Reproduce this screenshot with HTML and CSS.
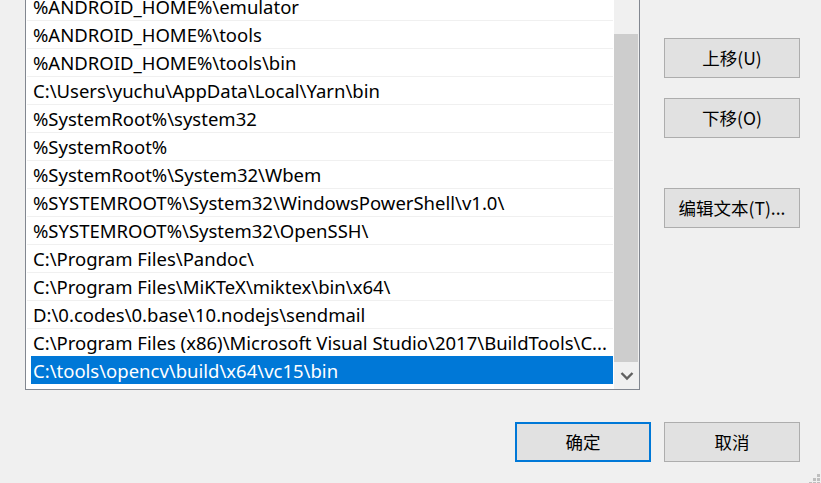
FILE: index.html
```html
<!DOCTYPE html>
<html lang="zh-CN">
<head>
<meta charset="utf-8">
<title>编辑环境变量</title>
<link rel="stylesheet" href="styles.css">
</head>
<body>
<div class="dialog">
  <div class="main">
    <div class="listbox">
      <ul class="items">
        <li><span class="txt">%ANDROID_HOME%\emulator</span></li>
        <li><span class="txt">%ANDROID_HOME%\tools</span></li>
        <li><span class="txt">%ANDROID_HOME%\tools\bin</span></li>
        <li><span class="txt">C:\Users\yuchu\AppData\Local\Yarn\bin</span></li>
        <li><span class="txt">%SystemRoot%\system32</span></li>
        <li><span class="txt">%SystemRoot%</span></li>
        <li><span class="txt">%SystemRoot%\System32\Wbem</span></li>
        <li><span class="txt">%SYSTEMROOT%\System32\WindowsPowerShell\v1.0\</span></li>
        <li><span class="txt">%SYSTEMROOT%\System32\OpenSSH\</span></li>
        <li><span class="txt">C:\Program Files\Pandoc\</span></li>
        <li><span class="txt">C:\Program Files\MiKTeX\miktex\bin\x64\</span></li>
        <li><span class="txt">D:\0.codes\0.base\10.nodejs\sendmail</span></li>
        <li><span class="txt">C:\Program Files (x86)\Microsoft Visual Studio\2017\BuildTools\C...</span></li>
        <li class="selected"><span class="txt">C:\tools\opencv\build\x64\vc15\bin</span></li>
      </ul>
      <div class="scrollbar">
        <div class="thumb"></div>
        <div class="arrow-down">
          <svg width="25" height="27" viewBox="0 0 25 27"><polyline points="7.5,11 13,16.5 18.5,11" fill="none" stroke="#606060" stroke-width="2.4"/></svg>
        </div>
      </div>
    </div>
    <div class="side">
      <button class="btn btn-up">上移(U)</button>
      <button class="btn btn-down">下移(O)</button>
      <button class="btn btn-edit">编辑文本(T)...</button>
    </div>
  </div>
  <div class="footer">
    <button class="btn btn-default">确定</button>
    <button class="btn">取消</button>
  </div>
  <svg class="grip" width="13" height="10" viewBox="0 0 13 10">
    <rect x="10" y="0" width="3" height="3" fill="#bfbfbf"/>
    <rect x="6" y="4" width="3" height="3" fill="#bfbfbf"/>
    <rect x="10" y="4" width="3" height="3" fill="#bfbfbf"/>
    <rect x="2" y="8" width="3" height="3" fill="#bfbfbf"/>
    <rect x="6" y="8" width="3" height="3" fill="#bfbfbf"/>
    <rect x="10" y="8" width="3" height="3" fill="#bfbfbf"/>
  </svg>
</div>
</body>
</html>
```
FILE: styles.css
```css
html, body {
  margin: 0;
  padding: 0;
  background: #f0f0f0;
  overflow: hidden;
}

.dialog {
  position: relative;
  width: 821px;
  height: 483px;
  overflow: hidden;
  font-family: "Noto Sans CJK SC", "Noto Sans", sans-serif;
  color: #000;
}

.main {
  display: flex;
  align-items: flex-start;
  margin-top: -9px;
  padding-left: 25px;
}

.listbox {
  display: flex;
  width: 613px;
  height: 397px;
  border: 1px solid #828790;
  background: #fff;
}

.items {
  list-style: none;
  margin: 0;
  padding: 0 1px;
  width: 586px;
  font-family: "Noto Sans", sans-serif;
  font-size: 18.5px;
}

.items li {
  height: 27px;
  line-height: 27px;
  border-top: 1px solid #f0f0f0;
  padding-left: 4px;
  white-space: nowrap;
  overflow: hidden;
}

.items .txt {
  display: block;
  padding-left: 2px;
  overflow: hidden;
}

.items li.selected {
  border-top: none;
  height: 28px;
}

.items li.selected .txt {
  height: 28px;
  line-height: 29px;
  background: #0078d7;
  color: #fff;
}

.scrollbar {
  display: flex;
  flex-direction: column;
  width: 25px;
  height: 397px;
  background: #f0f0f0;
}

.thumb {
  margin-top: 42px;
  width: 24px;
  height: 328px;
  background: #cdcdcd;
}

.arrow-down {
  height: 27px;
}

.arrow-down svg {
  display: block;
}

.side {
  display: flex;
  flex-direction: column;
  margin-left: 24px;
  padding-top: 47px;
}

.btn {
  box-sizing: border-box;
  width: 136px;
  height: 40px;
  padding: 0;
  margin: 0;
  border: 1px solid #adadad;
  background: #e1e1e1;
  color: #000;
  font-family: "Noto Sans CJK SC", "Noto Sans", sans-serif;
  font-size: 17.5px;
  line-height: 1;
}

.btn-down {
  margin-top: 20px;
}

.btn-edit {
  margin-top: 50px;
}

.footer {
  display: flex;
  justify-content: flex-end;
  gap: 13px;
  margin-top: 32px;
  padding-right: 21px;
}

.btn-default {
  border: 2px solid #0078d7;
}

.grip {
  position: absolute;
  right: 1px;
  bottom: -1px;
}
```
